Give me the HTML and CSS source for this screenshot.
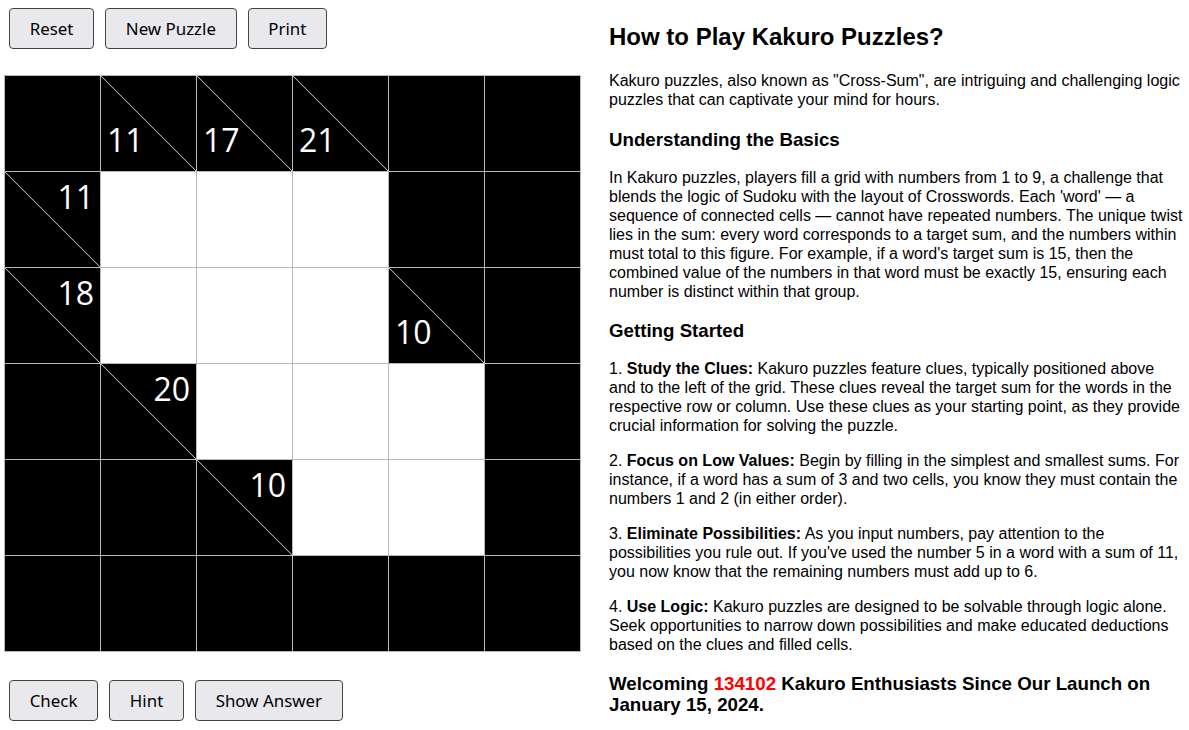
FILE: index.html
```html
<!DOCTYPE html>
<html>
<head>
<meta charset="utf-8">
<title>Kakuro</title>
<link rel="stylesheet" href="styles.css">
</head>
<body>
<div class="page">
  <div class="left">
    <div class="btn-row top">
      <button class="btn">Reset</button>
      <button class="btn">New Puzzle</button>
      <button class="btn">Print</button>
    </div>
    <div class="grid">
      <div class="cell black"></div>
      <div class="cell clue"><span class="down">11</span></div>
      <div class="cell clue"><span class="down">17</span></div>
      <div class="cell clue"><span class="down">21</span></div>
      <div class="cell black"></div>
      <div class="cell black"></div>

      <div class="cell clue"><span class="across">11</span></div>
      <div class="cell white"></div>
      <div class="cell white"></div>
      <div class="cell white"></div>
      <div class="cell black"></div>
      <div class="cell black"></div>

      <div class="cell clue"><span class="across">18</span></div>
      <div class="cell white"></div>
      <div class="cell white"></div>
      <div class="cell white"></div>
      <div class="cell clue"><span class="down">10</span></div>
      <div class="cell black"></div>

      <div class="cell black"></div>
      <div class="cell clue"><span class="across">20</span></div>
      <div class="cell white"></div>
      <div class="cell white"></div>
      <div class="cell white"></div>
      <div class="cell black"></div>

      <div class="cell black"></div>
      <div class="cell black"></div>
      <div class="cell clue"><span class="across">10</span></div>
      <div class="cell white"></div>
      <div class="cell white"></div>
      <div class="cell black"></div>

      <div class="cell black"></div>
      <div class="cell black"></div>
      <div class="cell black"></div>
      <div class="cell black"></div>
      <div class="cell black"></div>
      <div class="cell black"></div>
    </div>
    <div class="btn-row bottom">
      <button class="btn">Check</button>
      <button class="btn">Hint</button>
      <button class="btn">Show Answer</button>
    </div>
  </div>
  <div class="right">
    <h2 class="title">How to Play Kakuro Puzzles?</h2>
    <p class="para">Kakuro puzzles, also known as "Cross-Sum", are intriguing and challenging logic puzzles that can captivate your mind for hours.</p>
    <h3 class="sub">Understanding the Basics</h3>
    <p class="para">In Kakuro puzzles, players fill a grid with numbers from 1 to 9, a challenge that blends the logic of Sudoku with the layout of Crosswords. Each 'word' — a sequence of connected cells — cannot have repeated numbers. The unique twist lies in the sum: every word corresponds to a target sum, and the numbers within must total to this figure. For example, if a word's target sum is 15, then the combined value of the numbers in that word must be exactly 15, ensuring each number is distinct within that group.</p>
    <h3 class="sub">Getting Started</h3>
    <p class="para">1. <b>Study the Clues:</b> Kakuro puzzles feature clues, typically positioned above and to the left of the grid. These clues reveal the target sum for the words in the respective row or column. Use these clues as your starting point, as they provide crucial information for solving the puzzle.</p>
    <p class="para">2. <b>Focus on Low Values:</b> Begin by filling in the simplest and smallest sums. For instance, if a word has a sum of 3 and two cells, you know they must contain the numbers 1 and 2 (in either order).</p>
    <p class="para">3. <b>Eliminate Possibilities:</b> As you input numbers, pay attention to the possibilities you rule out. If you've used the number 5 in a word with a sum of 11, you now know that the remaining numbers must add up to 6.</p>
    <p class="para">4. <b>Use Logic:</b> Kakuro puzzles are designed to be solvable through logic alone. Seek opportunities to narrow down possibilities and make educated deductions based on the clues and filled cells.</p>
    <h3 class="sub welcome">Welcoming <span class="count">134102</span> Kakuro Enthusiasts Since Our Launch on January 15, 2024.</h3>
  </div>
</div>
</body>
</html>
```
FILE: styles.css
```css
html, body {
  margin: 0;
  padding: 0;
  background: #fff;
}
.page {
  display: flex;
  align-items: flex-start;
  gap: 28px;
}
.left {
  display: flex;
  flex-direction: column;
  padding: 8px 0 0 4px;
  width: 577px;
  flex: none;
}
.btn-row {
  display: flex;
  gap: 11px;
  padding-left: 5px;
}
.btn-row.top {
  margin-bottom: 26px;
}
.btn-row.bottom {
  margin-top: 28px;
}
.btn {
  font-family: "Noto Sans", sans-serif;
  font-size: 16.9px;
  line-height: 23px;
  padding: 8px 19.7px;
  color: #000;
  background: #e9e9ed;
  border: 1px solid #444;
  border-radius: 4px;
}
.grid {
  display: grid;
  grid-template-columns: repeat(6, 95px);
  grid-auto-rows: 95px;
  gap: 1px;
  padding: 1px;
  background: #b8b8b8;
  width: max-content;
}
.cell {
  position: relative;
  font-family: "Open Sans", "Noto Sans", sans-serif;
  color: #fff;
  font-size: 32px;
}
.black {
  background: #000;
}
.white {
  background: #fff;
}
.clue {
  background: linear-gradient(to top right, #000 calc(50% - 0.8px), #b0b0b0 50%, #000 calc(50% + 0.8px));
}
.down {
  position: absolute;
  left: 6px;
  bottom: 15px;
  line-height: 1;
}
.across {
  position: absolute;
  right: 6px;
  top: 9px;
  line-height: 1;
}
.right {
  width: 576px;
  font-family: "Liberation Sans", Arial, sans-serif;
  color: #000;
  padding-top: 23px;
}
.title {
  font-size: 24px;
  font-weight: bold;
  margin: 0 0 20px;
}
.para {
  font-size: 16px;
  line-height: 19px;
  margin: 0 0 16px;
}
.sub {
  font-size: 18.72px;
  font-weight: bold;
  margin: 19.5px 0 17px;
}
.welcome {
  line-height: 21px;
  margin-top: 19px;
}
.count {
  color: #ff0000;
}
```
